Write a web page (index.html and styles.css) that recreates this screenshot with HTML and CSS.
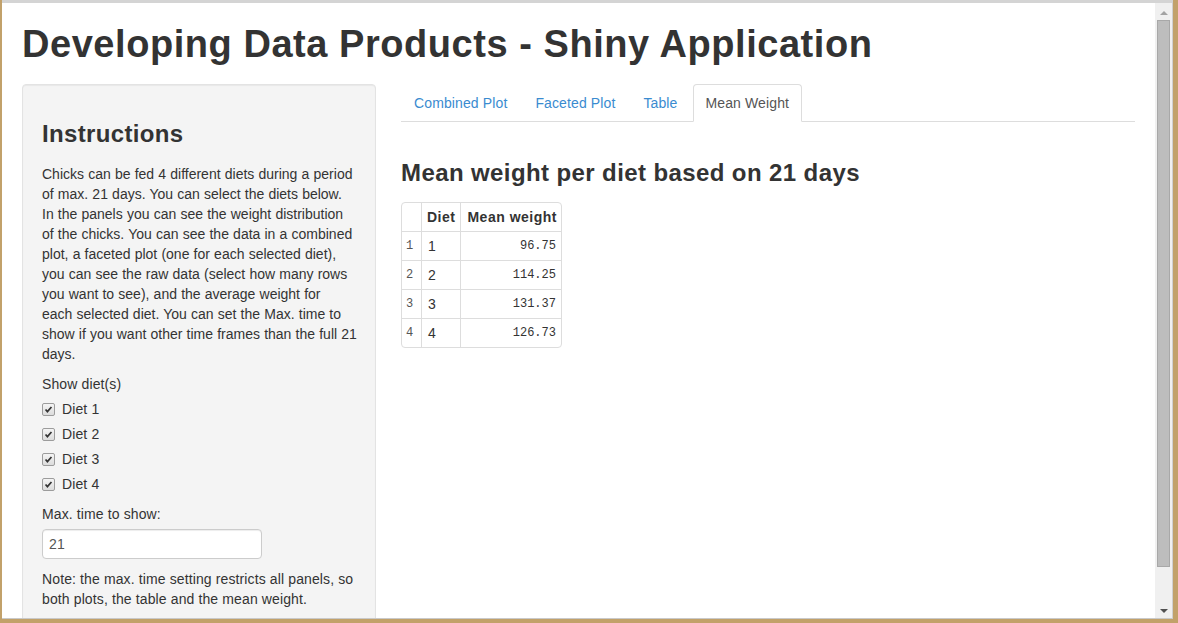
FILE: index.html
```html
<!DOCTYPE html>
<html>
<head>
<meta charset="utf-8">
<title>Developing Data Products - Shiny Application</title>
<link rel="stylesheet" href="styles.css">
</head>
<body>
<div class="frame">
  <div class="window">
    <div class="page">
      <h1 class="title">Developing Data Products - Shiny Application</h1>
      <div class="row">
        <aside class="well">
          <h3 class="well-title">Instructions</h3>
          <p class="intro">Chicks can be fed 4 different diets during a period of max. 21 days. You can select the diets below. In the panels you can see the weight distribution of the chicks. You can see the data in a combined plot, a faceted plot (one for each selected diet), you can see the raw data (select how many rows you want to see), and the average weight for<br>each selected diet. You can set the Max. time to<br><span class="nw">show if you want other time frames than the full 21</span><br>days.</p>
          <div class="label">Show diet(s)</div>
          <div class="checks">
            <label class="check"><span class="box"><svg viewBox="0 0 13 13" width="13" height="13"><path d="M3 6.5 L5.2 9 L10 3.5" fill="none" stroke="#333" stroke-width="2"/></svg></span>Diet 1</label>
            <label class="check"><span class="box"><svg viewBox="0 0 13 13" width="13" height="13"><path d="M3 6.5 L5.2 9 L10 3.5" fill="none" stroke="#333" stroke-width="2"/></svg></span>Diet 2</label>
            <label class="check"><span class="box"><svg viewBox="0 0 13 13" width="13" height="13"><path d="M3 6.5 L5.2 9 L10 3.5" fill="none" stroke="#333" stroke-width="2"/></svg></span>Diet 3</label>
            <label class="check"><span class="box"><svg viewBox="0 0 13 13" width="13" height="13"><path d="M3 6.5 L5.2 9 L10 3.5" fill="none" stroke="#333" stroke-width="2"/></svg></span>Diet 4</label>
          </div>
          <div class="label">Max. time to show:</div>
          <div class="input">21</div>
          <p class="note">Note: the max. time setting restricts all panels, so both plots, the table and the mean weight.</p>
        </aside>
        <main class="main">
          <ul class="tabs">
            <li class="tab"><a>Combined Plot</a></li>
            <li class="tab"><a>Faceted Plot</a></li>
            <li class="tab"><a>Table</a></li>
            <li class="tab active"><a>Mean Weight</a></li>
          </ul>
          <h3 class="main-title">Mean weight per diet based on 21 days</h3>
          <table class="data">
            <thead>
              <tr><th class="rn"></th><th class="dt">Diet</th><th class="mw">Mean weight</th></tr>
            </thead>
            <tbody>
              <tr><td class="rn">1</td><td class="dt">1</td><td class="mw">96.75</td></tr>
              <tr><td class="rn">2</td><td class="dt">2</td><td class="mw">114.25</td></tr>
              <tr><td class="rn">3</td><td class="dt">3</td><td class="mw">131.37</td></tr>
              <tr><td class="rn">4</td><td class="dt">4</td><td class="mw">126.73</td></tr>
            </tbody>
          </table>
        </main>
      </div>
    </div>
    <div class="scrollbar">
      <div class="arrow up"></div>
      <div class="track"><div class="thumb"></div></div>
      <div class="arrow down"></div>
    </div>
  </div>
</div>
</body>
</html>
```

FILE: styles.css
```css
* { box-sizing: border-box; }
html, body { margin: 0; padding: 0; }
body {
  width: 1178px;
  height: 623px;
  overflow: hidden;
  font-family: "Liberation Sans", Arial, sans-serif;
  font-size: 14px;
  line-height: 20px;
  letter-spacing: 0.12px;
  color: #333;
}
.frame {
  width: 1178px;
  height: 623px;
  background: #c2a16a;
  padding: 0 5px 4px 2px;
}
.window {
  display: flex;
  height: 619px;
  background: #fff;
  border-top: 3px solid #d4d4d4;
  border-right: 1px solid #d0d0d0;
  border-bottom: 1px solid #c9c9c9;
}
.page {
  width: 1153px;
  height: 615px;
  overflow: hidden;
  padding: 0 20px;
}
.title {
  margin: 21px 0 18px;
  font-size: 38px;
  line-height: 1.1;
  letter-spacing: 0.55px;
  font-weight: bold;
  color: #333;
}
.row {
  display: flex;
  gap: 25px;
  align-items: flex-start;
}
.well {
  width: 354px;
  flex: none;
  min-height: 700px;
  padding: 19px;
  background: #f4f4f4;
  border: 1px solid #e3e3e3;
  border-radius: 4px;
  box-shadow: inset 0 1px 1px rgba(0,0,0,.05);
}
.well-title {
  margin: 17px 0 17px;
  font-size: 24px;
  line-height: 1.1;
  letter-spacing: 0.35px;
  font-weight: bold;
}
.intro {
  margin: 0 0 10px;
  letter-spacing: 0;
  word-spacing: 0.28px;
}
.nw { white-space: nowrap; }
.label { margin-bottom: 5px; }
.checks {
  display: flex;
  flex-direction: column;
  gap: 5px;
  margin-bottom: 10px;
}
.check {
  display: flex;
  align-items: center;
  height: 20px;
}
.box {
  width: 13px;
  height: 13px;
  margin-right: 7px;
  border: 1px solid #9c9c9c;
  border-radius: 2px;
  background: linear-gradient(#f4f4f4, #dcdcdc);
  display: flex;
  align-items: center;
  justify-content: center;
}
.box svg { width: 11px; height: 11px; }
.input {
  width: 220px;
  height: 30px;
  padding: 4px 6px;
  background: #fff;
  border: 1px solid #ccc;
  border-radius: 4px;
  box-shadow: inset 0 1px 1px rgba(0,0,0,.075);
  color: #555;
  margin-bottom: 10px;
}
.note { margin: 0; }
.main {
  width: 734px;
  flex: none;
}
.tabs {
  list-style: none;
  margin: 0;
  padding: 0;
  display: flex;
  border-bottom: 1px solid #ddd;
}
.tab {
  margin-bottom: -1px;
  margin-right: 2px;
}
.tab a {
  display: block;
  padding: 9px 12px;
  line-height: 18px;
  border: 1px solid transparent;
  border-radius: 4px 4px 0 0;
  color: #3a8bd0;
}
.tab.active a {
  color: #555;
  background: #fff;
  border-color: #ddd #ddd transparent;
}
.main-title {
  margin: 38px 0 16px;
  font-size: 24px;
  line-height: 1.1;
  letter-spacing: 0.4px;
  font-weight: bold;
}
.data {
  border-collapse: separate;
  border-spacing: 0;
  border: 1px solid #ddd;
  border-radius: 4px;
}
.data th, .data td {
  height: 29px;
  padding: 0 5px;
  border-left: 1px solid #ddd;
  border-top: 1px solid #ddd;
  vertical-align: middle;
  text-align: left;
}
.data th {
  border-top: none;
  height: 28px;
  font-weight: bold;
  letter-spacing: 0.5px;
}
.data th:first-child, .data td:first-child { border-left: none; }
.data .rn {
  width: 19px;
  padding: 0 4px;
  font-family: "Liberation Mono", "Courier New", monospace;
  font-size: 12px;
  letter-spacing: 0;
  color: #555;
}
.data td.dt { width: 39px; padding-left: 6px; }
.data td.mw {
  text-align: right;
  font-family: "Liberation Mono", "Courier New", monospace;
  font-size: 12px;
  letter-spacing: 0;
}
.data th.mw { padding: 0 4px 0 6px; }
.scrollbar {
  width: 17px;
  height: 615px;
  background: #f0f0f0;
  display: flex;
  flex-direction: column;
  align-items: center;
}
.arrow {
  width: 0;
  height: 0;
  border-left: 4px solid transparent;
  border-right: 4px solid transparent;
  flex: none;
}
.arrow.up {
  margin: 8px 0 5px;
  border-bottom: 4px solid #a3a3a3;
}
.arrow.down {
  margin: 5px 0 5px;
  border-top: 4px solid #505050;
}
.track {
  flex: 1;
  width: 100%;
  display: flex;
  justify-content: center;
}
.thumb {
  width: 13px;
  height: 547px;
  background: #bdbdbd;
  border: 1px solid #a8a8a8;
}
```
